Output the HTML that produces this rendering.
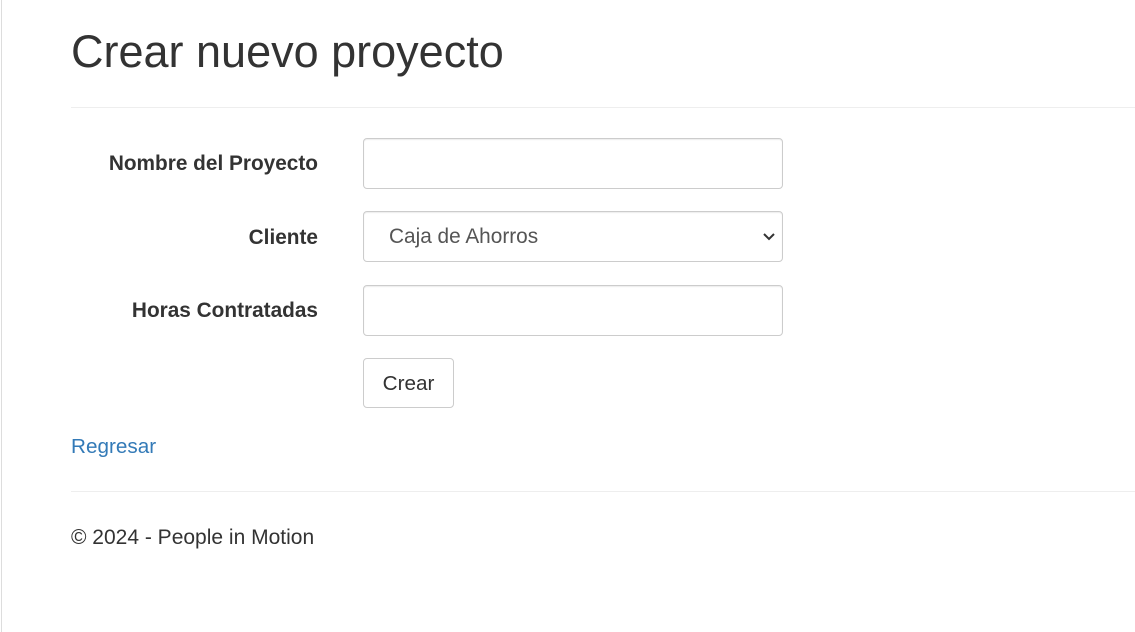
<!DOCTYPE html>
<html><head><meta charset="utf-8"><style>
body{margin:0;width:1135px;height:632px;background:#fff;font-family:"Liberation Sans",sans-serif;color:#333;position:relative;overflow:hidden}
.lb{position:absolute;left:1px;top:0;width:1px;height:632px;background:#ddd}
.a{position:absolute;white-space:nowrap}
h1{position:absolute;left:71px;top:26px;margin:0;font-weight:400;font-size:45px;line-height:52px}
.hr{position:absolute;left:71px;right:0;height:1px;background:#eee}
.lab{position:absolute;right:817px;font-weight:bold;font-size:20.8px;line-height:24px}
.in{position:absolute;left:363px;width:418px;height:49px;border:1px solid #ccc;border-radius:4px;box-shadow:inset 0 1px 1px rgba(0,0,0,.075)}
.btn{position:absolute;left:363px;top:358px;width:89px;height:48px;border:1px solid #ccc;border-radius:4px;font-size:20.7px;line-height:50px;text-align:center}
</style></head><body>
<div class="lb"></div>
<h1>Crear nuevo proyecto</h1>
<div class="hr" style="top:107px"></div>
<div class="lab" style="top:152px">Nombre del Proyecto</div>
<div class="in" style="top:138px"></div>
<div class="lab" style="top:226px">Cliente</div>
<div class="in" style="top:211px"><span class="a" style="left:25px;top:13px;font-size:20.8px;color:#555">Caja de Ahorros</span>
<svg class="a" style="left:398px;top:20px" width="14" height="10" viewBox="0 0 14 10"><path d="M2 2l5 5 5-5" fill="none" stroke="#333" stroke-width="2"/></svg></div>
<div class="lab" style="top:299px">Horas Contratadas</div>
<div class="in" style="top:285px"></div>
<div class="btn">Crear</div>
<div class="a" style="left:71px;top:435px;font-size:20.7px;color:#337ab7">Regresar</div>
<div class="hr" style="top:491px"></div>
<div class="a" style="left:71px;top:526px;font-size:21px">© 2024 - People in Motion</div>
</body></html>
